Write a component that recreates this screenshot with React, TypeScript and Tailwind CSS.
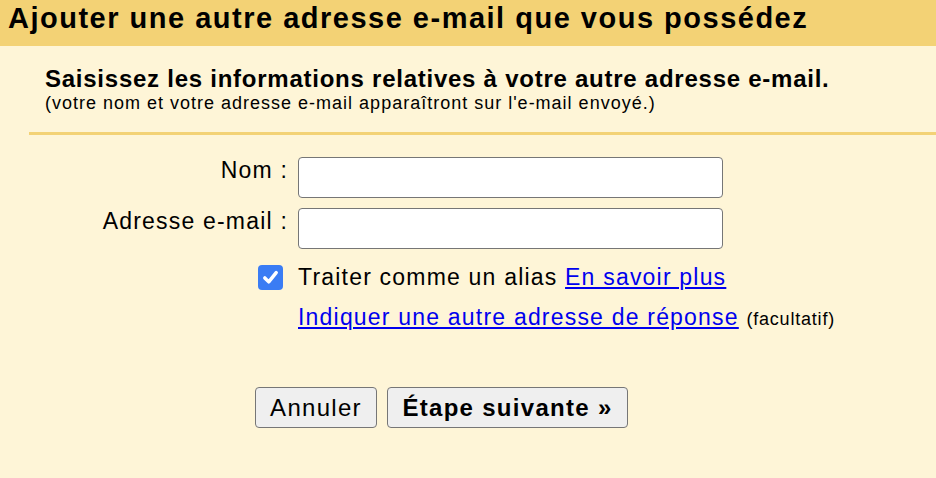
export default function App() {
  const input =
    "w-[425px] h-[41px] bg-white border border-[#767676] rounded-[4px] outline-none";
  const button =
    "h-[41px] bg-[#efefef] border border-[#767676] rounded-[4px] text-[24px] tracking-[1.3px]";

  return (
    <div className="w-[936px] h-[478px] bg-[#fef5d7] font-['Liberation_Sans',Arial,sans-serif] text-black overflow-hidden">
      <div className="h-[46px] bg-[#f3d275] pl-[8px] pt-[4px]">
        <h1 className="text-[29px] font-bold leading-none tracking-[1.5px]">
          Ajouter une autre adresse e-mail que vous possédez
        </h1>
      </div>

      <div className="pl-[45px] pt-[19px]">
        <p className="text-[24px] font-bold leading-[27px] tracking-[0.75px]">
          Saisissez les informations relatives à votre autre adresse e-mail.
        </p>
        <p className="text-[18px] leading-[22px] tracking-[1px]">
          (votre nom et votre adresse e-mail apparaîtront sur l'e-mail envoyé.)
        </p>
      </div>

      <div className="ml-[29px] mt-[18px] h-[3px] bg-[#f3d275]" />

      <div className="grid grid-cols-[288px_auto] gap-x-[10px] mt-[22px] items-start text-[23px] tracking-[1.2px]">
        <label className="text-right leading-none pt-[2px]">Nom :</label>
        <input className={input} />

        <label className="text-right leading-none pt-[2px] mt-[10px]">Adresse e-mail :</label>
        <input className={`${input} mt-[10px]`} />

        <div className="flex justify-end pr-[5px] mt-[16px]">
          <span className="w-[25px] h-[25px] rounded-[4px] bg-[#3a7cf4] flex items-center justify-center">
            <svg viewBox="0 0 24 24" className="w-[21px] h-[21px]" fill="none" stroke="white" strokeWidth="4" strokeLinecap="round" strokeLinejoin="round">
              <path d="M5.5 12.5l4.5 4.5L18.5 6.5" />
            </svg>
          </span>
        </div>
        <div className="leading-[25px] mt-[16px]">
          Traiter comme un alias{" "}
          <a className="text-[#0000ee] underline" href="#">En savoir plus</a>
        </div>

        <div />
        <div className="leading-[28px] mt-[13px]">
          <a className="text-[#0000ee] underline" href="#">
            Indiquer une autre adresse de réponse
          </a>{" "}
          <span className="text-[18px] tracking-[0.8px]">(facultatif)</span>
        </div>
      </div>

      <div className="flex gap-[10px] pl-[255px] mt-[54px]">
        <button className={`${button} w-[122px]`}>Annuler</button>
        <button className={`${button} w-[241px] font-bold`}>Étape suivante »</button>
      </div>
    </div>
  );
}
